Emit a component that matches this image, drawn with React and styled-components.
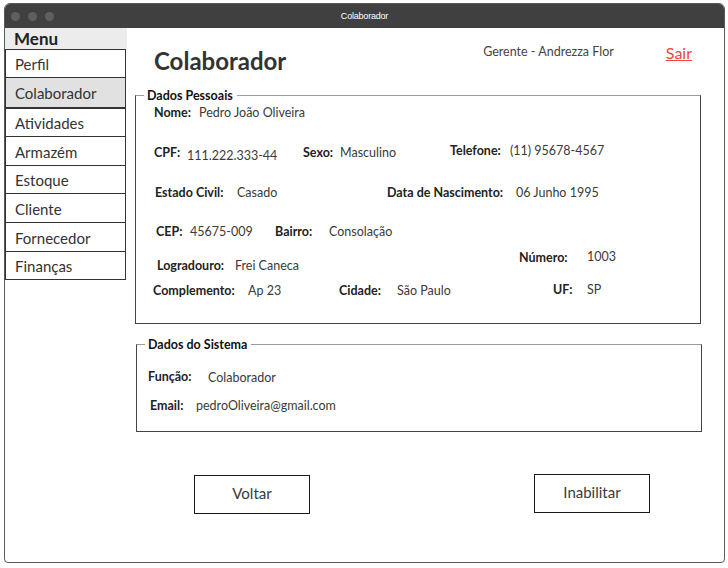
import React from "react";
import styled, { createGlobalStyle } from "styled-components";

const GlobalStyle = createGlobalStyle`
  html, body {
    margin: 0;
    background: #fff;
  }
  body {
    padding: 3px 0 0 4px;
    font-family: "Lato", "Open Sans", sans-serif;
  }
  * { box-sizing: border-box; }
`;

const Window = styled.div`
  width: 721px;
  height: 560px;
  border: 1px solid #5a5a5a;
  border-radius: 6px 6px 4px 4px;
  overflow: hidden;
  display: flex;
  flex-direction: column;
`;

const TitleBar = styled.div`
  height: 24px;
  background: #404040;
  display: grid;
  grid-template-columns: 1fr auto 1fr;
  align-items: center;
  padding: 0 6px;
`;

const Dots = styled.div`
  display: flex;
  gap: 8px;
`;

const Dot = styled.span`
  width: 9px;
  height: 9px;
  border-radius: 50%;
  background: #5f5f5f;
`;

const WindowTitle = styled.div`
  color: #fff;
  font-family: "Liberation Sans", sans-serif;
  font-size: 9px;
  letter-spacing: -0.2px;
`;

const Body = styled.div`
  flex: 1;
  display: flex;
`;

const Sidebar = styled.nav`
  width: 121px;
  display: flex;
  flex-direction: column;
`;

const MenuHeader = styled.div`
  height: 21px;
  width: 122px;
  background: #ececec;
  color: #222;
  font-weight: 700;
  font-size: 17px;
  line-height: 21px;
  padding-left: 9px;
`;

const MenuItem = styled.div`
  height: ${(p) => p.$h}px;
  border: 1px solid #333;
  border-top: ${(p) => (p.$first ? "1px solid #333" : "none")};
  border-bottom-width: ${(p) => (p.$active ? 2 : 1)}px;
  background: ${(p) => (p.$active ? "#e1e1e1" : "#fff")};
  color: #333;
  font-size: 15px;
  display: flex;
  align-items: center;
  padding-left: 9px;
  padding-top: 1px;
`;

const Main = styled.main`
  flex: 1;
  display: flex;
  flex-direction: column;
`;

const Header = styled.header`
  height: 67px;
  display: flex;
  align-items: flex-start;
  padding: 0 32px 0 28px;
`;

const PageTitle = styled.h1`
  margin: 19px 0 0;
  font-size: 24px;
  line-height: 28px;
  font-weight: 700;
  color: #333;
`;

const UserName = styled.div`
  margin: 16px 0 0 auto;
  font-size: 12.5px;
  line-height: 16px;
  color: #444;
`;

const Logout = styled.a`
  margin: 15px 0 0 52px;
  font-size: 16px;
  line-height: 19px;
  color: #f0463c;
  text-decoration: underline;
  cursor: pointer;
`;

const Group = styled.section`
  margin-left: ${(p) => p.$x}px;
  margin-top: ${(p) => p.$top || 0}px;
  width: 566px;
  height: ${(p) => p.$h}px;
  border: 1px solid #444;
  border-top-color: #9a9a9a;
  display: flex;
  flex-direction: column;
`;

const Legend = styled.div`
  margin: -9px 0 0 8px;
  padding: 0 4px 0 3px;
  width: fit-content;
  background: #fff;
  color: #111;
  font-size: 12.5px;
  line-height: 17px;
  font-weight: 700;
`;

const Row = styled.div`
  display: flex;
  align-items: flex-start;
  margin-top: ${(p) => p.$top || 0}px;
  padding-left: ${(p) => p.$x}px;
`;

const Field = styled.div`
  display: flex;
  align-items: flex-start;
  width: ${(p) => (p.$w ? `${p.$w}px` : "auto")};
  margin-top: ${(p) => p.$dy || 0}px;
  line-height: 18px;
  font-size: 12.5px;
  white-space: nowrap;
`;

const Label = styled.span`
  width: ${(p) => p.$w}px;
  font-weight: 700;
  color: #222;
`;

const Value = styled.span`
  color: #3a3a3a;
  position: relative;
  top: ${(p) => p.$dy || 0}px;
`;

const Actions = styled.div`
  display: flex;
  align-items: flex-start;
  gap: 224px;
  margin-top: 43px;
  padding-left: 68px;
`;

const Button = styled.button`
  width: 116px;
  height: 39px;
  margin-top: ${(p) => p.$dy || 0}px;
  padding: 0 0 3px;
  border: 1.5px solid #1a1a1a;
  background: #fff;
  color: #3a3a3a;
  font-family: inherit;
  font-size: 15px;
  cursor: pointer;
`;

const menu = [
  ["Perfil", 29],
  ["Colaborador", 31],
  ["Atividades", 28],
  ["Armazém", 29],
  ["Estoque", 28],
  ["Cliente", 29],
  ["Fornecedor", 29],
  ["Finanças", 28],
];

export default function App() {
  return (
    <>
      <GlobalStyle />
      <Window>
        <TitleBar>
          <Dots>
            <Dot />
            <Dot />
            <Dot />
          </Dots>
          <WindowTitle>Colaborador</WindowTitle>
          <span />
        </TitleBar>
        <Body>
          <Sidebar>
            <MenuHeader>Menu</MenuHeader>
            {menu.map(([m, h], i) => (
              <MenuItem key={m} $h={h} $first={i === 0} $active={m === "Colaborador"}>
                {m}
              </MenuItem>
            ))}
          </Sidebar>
          <Main>
            <Header>
              <PageTitle>Colaborador</PageTitle>
              <UserName>Gerente - Andrezza Flor</UserName>
              <Logout>Sair</Logout>
            </Header>

            <Group $x={9} $h={229}>
              <Legend>Dados Pessoais</Legend>
              <Row $x={18}>
                <Field>
                  <Label $w={45}>Nome:</Label>
                  <Value>Pedro João Oliveira</Value>
                </Field>
              </Row>
              <Row $x={18} $top={22}>
                <Field $w={149}>
                  <Label $w={33}>CPF:</Label>
                  <Value $dy={3}>111.222.333-44</Value>
                </Field>
                <Field $w={147}>
                  <Label $w={37}>Sexo:</Label>
                  <Value>Masculino</Value>
                </Field>
                <Field $dy={-2}>
                  <Label $w={60}>Telefone:</Label>
                  <Value>(11) 95678-4567</Value>
                </Field>
              </Row>
              <Row $x={19} $top={22}>
                <Field $w={232}>
                  <Label $w={82}>Estado Civil:</Label>
                  <Value>Casado</Value>
                </Field>
                <Field>
                  <Label $w={129}>Data de Nascimento:</Label>
                  <Value>06 Junho 1995</Value>
                </Field>
              </Row>
              <Row $x={20} $top={21}>
                <Field $w={119}>
                  <Label $w={34}>CEP:</Label>
                  <Value>45675-009</Value>
                </Field>
                <Field>
                  <Label $w={54}>Bairro:</Label>
                  <Value>Consolação</Value>
                </Field>
              </Row>
              <Row $x={21} $top={8}>
                <Field $w={362} $dy={8}>
                  <Label $w={78}>Logradouro:</Label>
                  <Value>Frei Caneca</Value>
                </Field>
                <Field>
                  <Label $w={68}>Número:</Label>
                  <Value $dy={-1}>1003</Value>
                </Field>
              </Row>
              <Row $x={17} $top={7}>
                <Field $w={186}>
                  <Label $w={95}>Complemento:</Label>
                  <Value>Ap 23</Value>
                </Field>
                <Field $w={214}>
                  <Label $w={58}>Cidade:</Label>
                  <Value>São Paulo</Value>
                </Field>
                <Field $dy={-1}>
                  <Label $w={34}>UF:</Label>
                  <Value>SP</Value>
                </Field>
              </Row>
            </Group>

            <Group $x={10} $h={88} $top={20}>
              <Legend>Dados do Sistema</Legend>
              <Row $x={11} $top={15}>
                <Field>
                  <Label $w={60}>Função:</Label>
                  <Value $dy={1}>Colaborador</Value>
                </Field>
              </Row>
              <Row $x={13} $top={11}>
                <Field>
                  <Label $w={46}>Email:</Label>
                  <Value>pedroOliveira@gmail.com</Value>
                </Field>
              </Row>
            </Group>

            <Actions>
              <Button>Voltar</Button>
              <Button $dy={-1}>Inabilitar</Button>
            </Actions>
          </Main>
        </Body>
      </Window>
    </>
  );
}
